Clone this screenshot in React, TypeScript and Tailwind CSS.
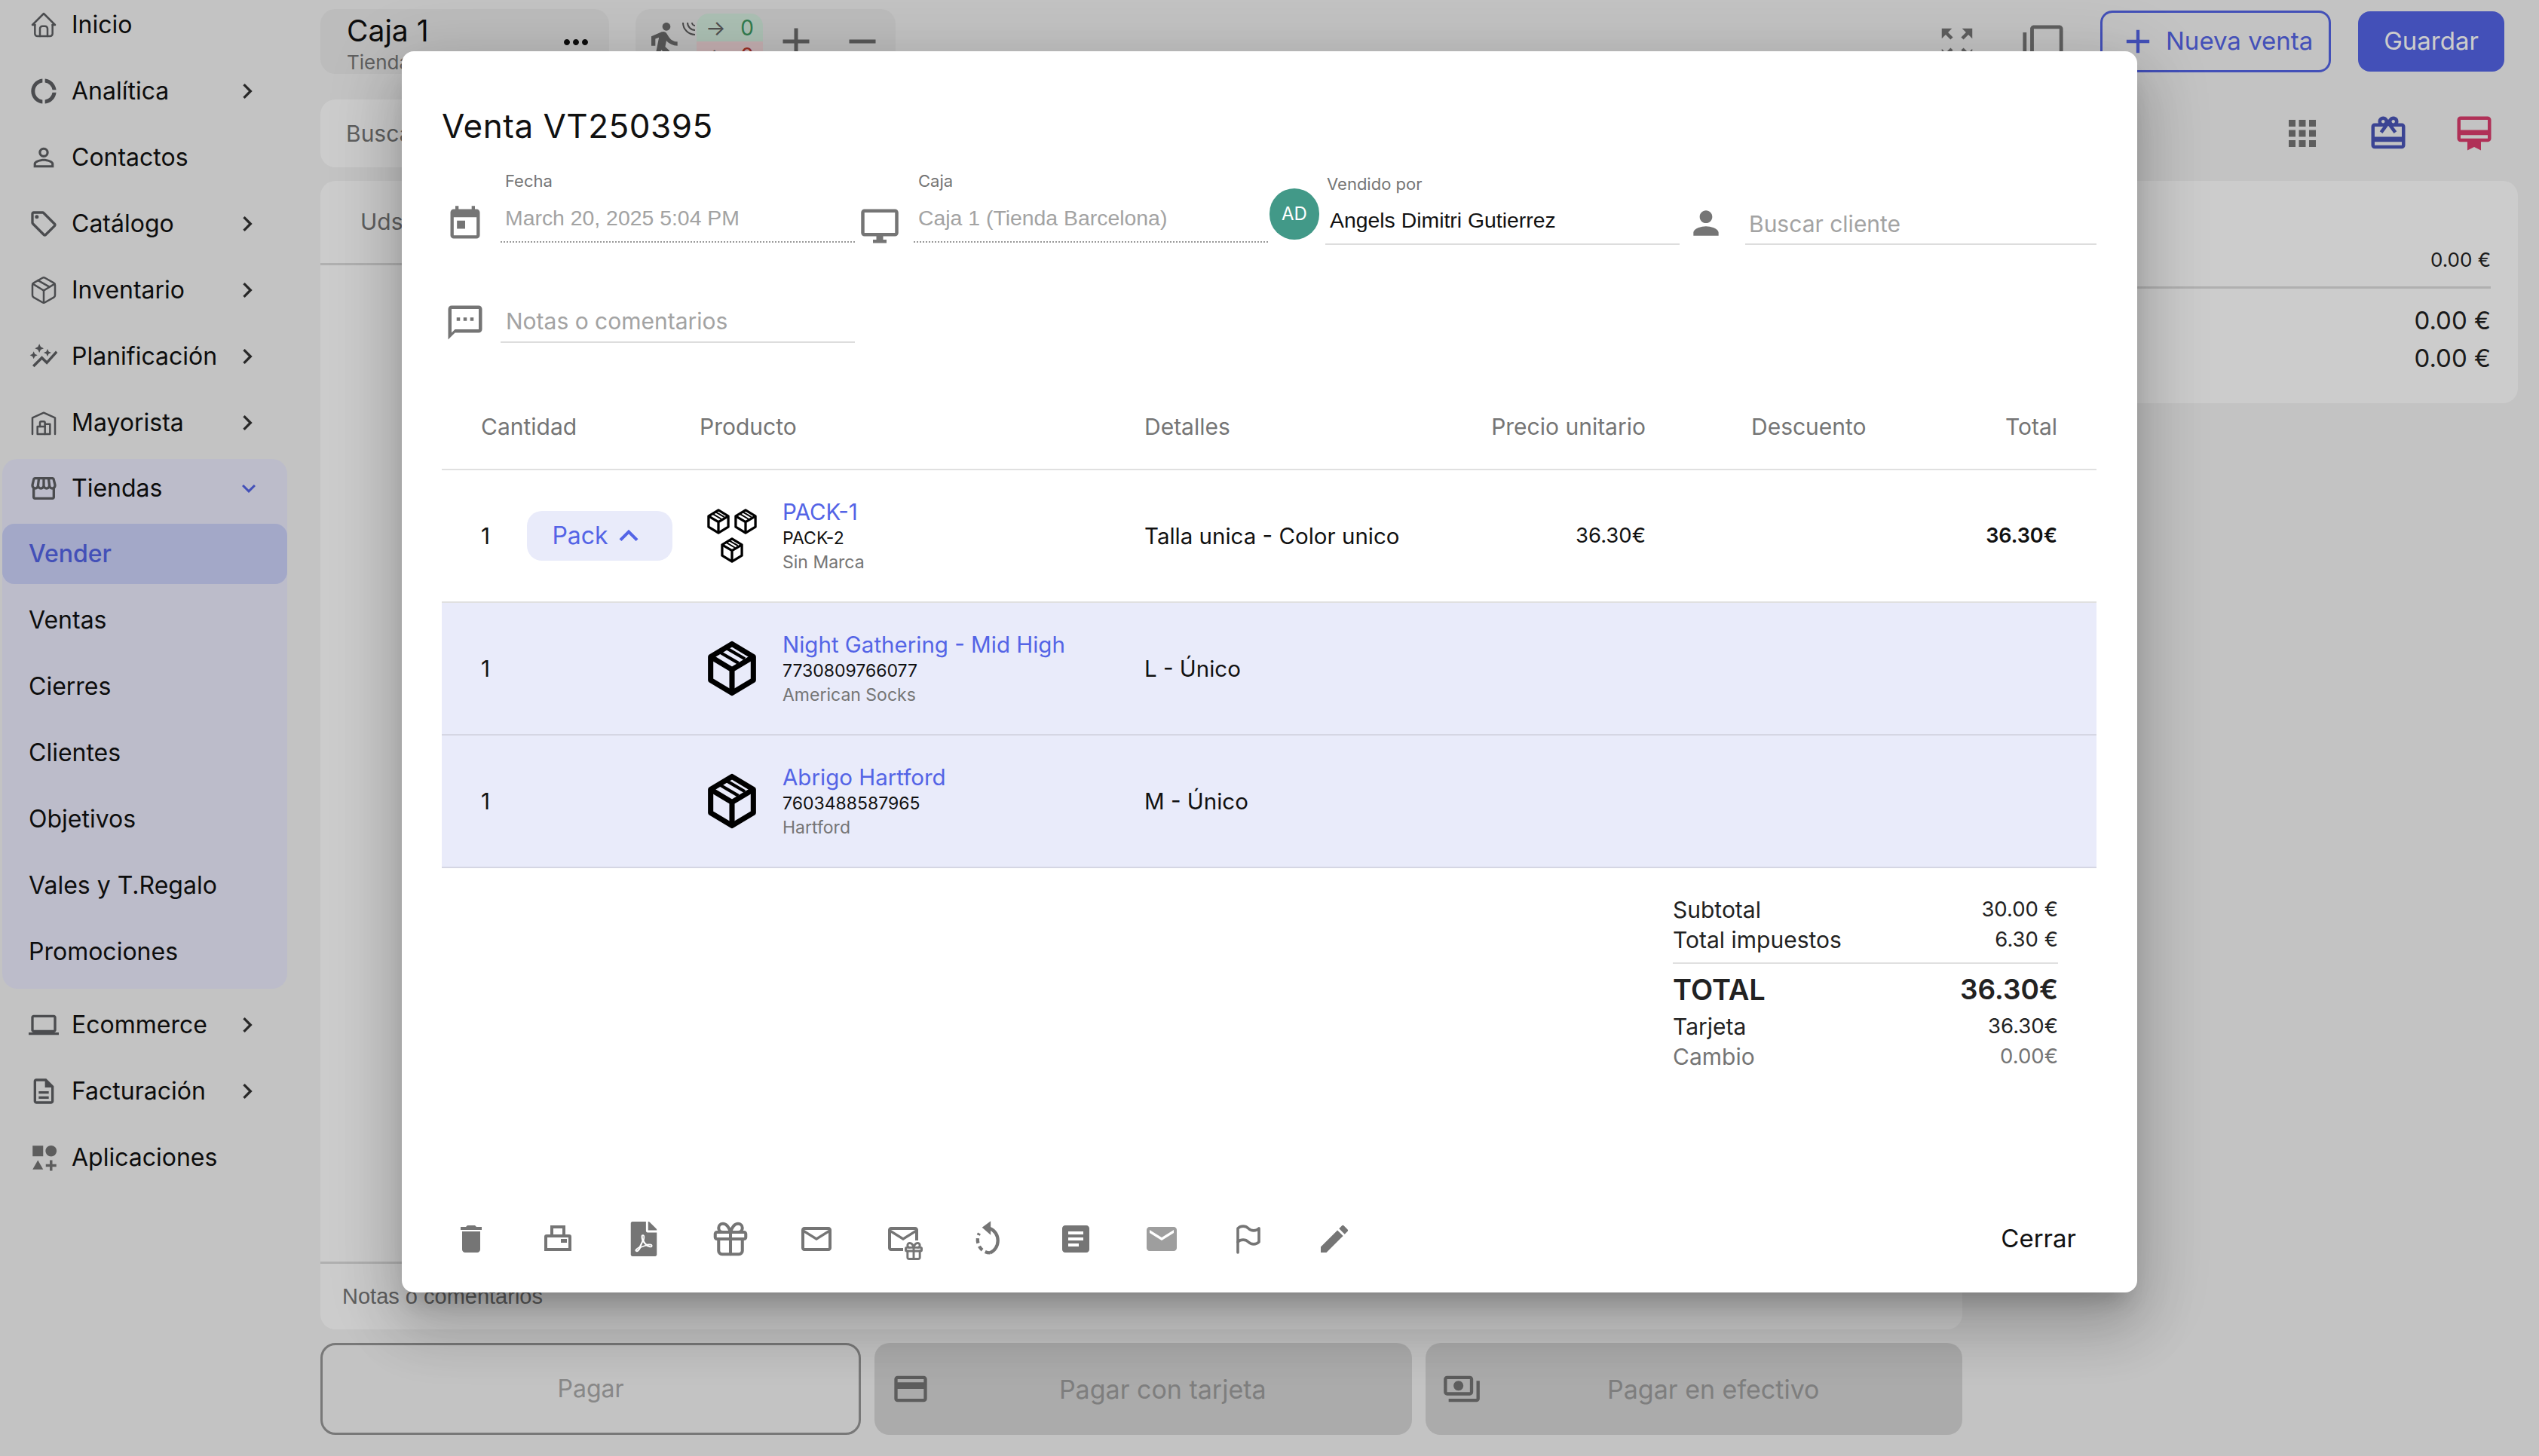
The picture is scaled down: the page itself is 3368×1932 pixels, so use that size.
import {
  MdAdd, MdApps, MdArticle, MdAutoGraph, MdCreditCard, MdDelete, MdDirectionsWalk, MdEdit, MdEmail, MdKeyboardArrowDown,
  MdKeyboardArrowRight, MdKeyboardArrowUp, MdMoreHoriz, MdOutlineCardGiftcard, MdOutlineCardMembership, MdOutlineDescription,
  MdOutlineDesktopWindows, MdOutlineDonutLarge, MdOutlineFilterNone, MdOutlineLaptop, MdOutlineMail, MdOutlinePayments,
  MdOutlinePersonOutline, MdOutlineSell, MdOutlineStorefront, MdOutlineTextsms, MdPerson, MdRemove, MdToday, MdZoomOutMap,
} from 'react-icons/md';
import { FaFilePdf } from 'react-icons/fa';
import { LuGift, LuPackage } from 'react-icons/lu';
import { TbBuildingWarehouse, TbFlag, TbHome } from 'react-icons/tb';
import type { ReactNode } from 'react';

const sans = 'font-["Inter",sans-serif]';
const helvetica = "font-['Liberation_Sans',sans-serif]";

const AppsIcon = () => (
  <svg viewBox="0 0 24 24" className="w-[42px] h-[42px] fill-[#757575]">
    <rect x="3" y="3" width="8" height="8" />
    <circle cx="17" cy="7" r="4.2" />
    <path d="M7 14l4 7H3z" />
    <path d="M16 14h2v3h3v2h-3v3h-2v-3h-3v-2h3z" />
  </svg>
);

const PrinterIcon = () => (
  <svg viewBox="0 0 24 24" className="w-[48px] h-[48px] fill-[#757575]">
    <path d="M7 3h10v6h2.500A1.500 1.500 0 0 1 21 10.500V20H3v-9.500A1.500 1.500 0 0 1 4.500 9H7zm2 2v4h6V5zM5 11v7h14v-7z" fillRule="evenodd" />
    <rect x="14" y="12" width="4" height="2.500" />
  </svg>
);

const ReplayIcon = () => (
  <svg viewBox="0 0 24 24" className="w-[52px] h-[52px]">
    <path d="M12.500 2v6.500L8.500 5z" fill="#757575" stroke="#757575" strokeWidth="1" />
    <path d="M12.500 5.500a7.500 8 0 0 1 0 15" fill="none" stroke="#757575" strokeWidth="2" />
    <path d="M12.500 20.500a7.500 8 0 0 1-6.500-12" fill="none" stroke="#757575" strokeWidth="2" strokeDasharray="3 2" />
  </svg>
);

const BoxIcon = ({ className }: { className: string }) => (
  <svg viewBox="0 0 24 26" className={className} fill="none" stroke="#000" strokeWidth="2.500" strokeLinejoin="round">
    <path d="M12 1.500L22 7.500V18.500L12 24.500L2 18.500V7.500Z" />
    <path d="M2 7.500L12 13.500L22 7.500M12 13.500V24.500" />
    <path d="M6.500 5.500L15 10.500" strokeWidth="1.500" />
    <path d="M9.500 3.500L18 8.500" strokeWidth="1.500" />
  </svg>
);

const GiftMailIcon = () => (
  <div className="relative w-[48px] h-[48px]">
    <MdOutlineMail className="w-[48px] h-[48px] text-[#757575]" />
    <div className="absolute right-[-4px] bottom-[-6px] bg-white rounded-[4px]">
      <LuGift className="w-[28px] h-[28px] text-[#757575]" strokeWidth={2.500} />
    </div>
  </div>
);

const WavesIcon = () => (
  <svg viewBox="0 0 20 20" className="w-[20px] h-[20px] ml-[-8px] mt-[16px]" fill="none" stroke="#5e5e5e" strokeWidth="2">
    <path d="M2 2a16 16 0 0 0 16 16" />
    <path d="M8 2a10 10 0 0 0 10 10" />
    <path d="M14 2a4 4 0 0 0 4 4" />
  </svg>
);

const sideIcon = 'w-[40px] h-[40px] text-[#5e6063] shrink-0';

const NavRow = ({ icon, label, arrow = true }: { icon: ReactNode; label: string; arrow?: boolean }) => (
  <div className="flex items-center h-[80px] pl-[38px]">
    <div className="w-[57px] flex items-center">{icon}</div>
    <span className="text-[32px] text-[#111]">{label}</span>
    {arrow && <MdKeyboardArrowRight className="absolute left-[308px] w-[40px] h-[40px] text-[#333]" />}
  </div>
);

const SubRow = ({ label, active }: { label: string; active?: boolean }) => (
  <div className={`flex items-center h-[80px] pl-[35px] rounded-[16px] text-[32px] ${active ? 'bg-[#ccd2fb] text-[#5464e6] font-medium' : 'text-[#111]'}`}>
    {label}
  </div>
);

const Sidebar = () => (
  <aside className="w-[425px] shrink-0 -mt-[7px] flex flex-col gap-[8px] relative">
    <NavRow icon={<TbHome className={sideIcon} strokeWidth={1.500} />} label="Inicio" arrow={false} />
    <NavRow icon={<MdOutlineDonutLarge className={sideIcon} />} label="Analítica" />
    <NavRow icon={<MdOutlinePersonOutline className={sideIcon} />} label="Contactos" arrow={false} />
    <NavRow icon={<MdOutlineSell className={sideIcon} />} label="Catálogo" />
    <NavRow icon={<LuPackage className={sideIcon} strokeWidth={1.500} />} label="Inventario" />
    <NavRow icon={<MdAutoGraph className={sideIcon} />} label="Planificación" />
    <NavRow icon={<TbBuildingWarehouse className={sideIcon} strokeWidth={1.500} />} label="Mayorista" />
    <div className="ml-[3px] w-[378px] bg-[#ebecfd] rounded-[20px] flex flex-col gap-[8px] pb-[9px]">
      <div className="flex items-center h-[78px] pl-[35px] relative">
        <div className="w-[57px]"><MdOutlineStorefront className={sideIcon} /></div>
        <span className="text-[32px] text-[#111]">Tiendas</span>
        <MdKeyboardArrowDown className="absolute left-[309px] w-[36px] h-[36px] text-[#5464e6]" />
      </div>
      <SubRow label="Vender" active />
      <SubRow label="Ventas" />
      <SubRow label="Cierres" />
      <SubRow label="Clientes" />
      <SubRow label="Objetivos" />
      <SubRow label="Vales y T.Regalo" />
      <SubRow label="Promociones" />
    </div>
    <NavRow icon={<MdOutlineLaptop className={sideIcon} />} label="Ecommerce" />
    <NavRow icon={<MdOutlineDescription className={sideIcon} />} label="Facturación" />
    <NavRow icon={<AppsIcon />} label="Aplicaciones" arrow={false} />
  </aside>
);

const TopBar = () => (
  <div className="flex items-start pt-[12px] pr-[46px] h-[134px]">
    <div className="w-[383px] h-[86px] rounded-[20px] bg-[#ebebeb] pl-[35px] pr-[24px] pt-[2px] relative">
      <div className="text-[39px] leading-[54px] text-[#111]">Caja 1</div>
      <div className="text-[26px] leading-[30px] text-[#777]">Tienda Barcelona</div>
      <MdMoreHoriz className="absolute right-[20px] top-[20px] w-[48px] h-[48px] text-[#111]" />
    </div>
    <div className="ml-[35px] w-[345px] h-[86px] rounded-[20px] bg-[#ebebeb] flex items-start">
      <MdDirectionsWalk className="ml-[5px] mt-[14px] w-[64px] h-[64px] text-[#6d6d6d]" />
      <WavesIcon />
      <div className="mt-[6px] w-[88px] rounded-[16px] overflow-hidden">
        <div className="h-[37px] bg-[#d8f0e2] flex items-center justify-between px-[12px] text-[28px] text-[#3e9b62]"><span className="text-[#666]">→</span>0</div>
        <div className="h-[37px] bg-[#f5dadd] flex items-center justify-between px-[12px] text-[28px] text-[#c0392b]"><span className="text-[#666]">←</span>0</div>
      </div>
      <MdAdd className="ml-[14px] mt-[13px] w-[60px] h-[60px] text-[#6d6d6d]" />
      <MdRemove className="ml-[28px] mt-[13px] w-[60px] h-[60px] text-[#6d6d6d]" />
    </div>
    <div className="ml-auto flex items-center mt-[2px]">
      <MdZoomOutMap className="w-[54px] h-[54px] text-[#777] mt-[6px]" />
      <MdOutlineFilterNone className="ml-[58px] w-[58px] h-[58px] text-[#777] mt-[10px]" />
      <button className={`ml-[47px] w-[306px] h-[82px] rounded-[16px] border-[3px] border-[#5464e6] text-[#5464e6] text-[33px] flex items-center pl-[21px] gap-[11px] ${sans}`}>
        <MdAdd className="w-[52px] h-[52px]" />Nueva venta
      </button>
      <button className={`ml-[36px] w-[194px] h-[80px] rounded-[16px] bg-[#5464e6] text-white text-[33px] ${sans}`}>Guardar</button>
    </div>
  </div>
);

const PayButtons = () => (
  <div className="flex gap-[18px] h-[122px] text-[32px]">
    <div className="w-[717px] rounded-[20px] border-[3px] border-[#969696] flex items-center justify-center text-[#aaa]">Pagar</div>
    <div className="flex-1 rounded-[20px] bg-[#d6d6d6] flex items-center relative justify-center pl-[52px] text-[#9e9e9e] text-[34px]">
      <MdCreditCard className="absolute left-[22px] w-[52px] h-[52px] text-[#757575]" />
      Pagar con tarjeta
    </div>
    <div className="flex-1 rounded-[20px] bg-[#d6d6d6] flex items-center relative justify-center pl-[52px] text-[#9e9e9e] text-[34px]">
      <MdOutlinePayments className="absolute left-[22px] w-[52px] h-[52px] text-[#757575]" />
      Pagar en efectivo
    </div>
  </div>
);

const Background = () => (
  <div className="flex h-full">
    <Sidebar />
    <div className="flex-1 flex flex-col min-w-0">
      <TopBar />
      <div className="flex flex-1 min-h-0">
        <div className="w-[2178px] flex flex-col">
          <div className="h-[90px] rounded-[20px] bg-white flex items-center pl-[34px] text-[30px] text-[#777] -mt-[2px]">Buscar</div>
          <div className="mt-[18px] h-[1524px] rounded-[20px] bg-white flex flex-col">
            <div className="h-[112px] border-b-[3px] border-[#ddd] pl-[53px] flex items-center text-[30px] text-[#777]">Uds</div>
            <div className="flex-1" />
            <div className={`h-[90px] border-t-[3px] border-[#ddd] pl-[29px] flex items-center text-[29px] text-[#777] ${helvetica}`}>Notas o comentarios</div>
          </div>
          <div className="mt-[18px]"><PayButtons /></div>
        </div>
        <div className="flex-1 pl-[22px] pr-[28px] -mt-[2px]">
          <div className="flex items-center justify-end gap-[60px] h-[90px] pr-[31px]">
            <MdApps className="w-[54px] h-[54px] text-[#757575]" />
            <MdOutlineCardGiftcard className="w-[54px] h-[54px] text-[#4a56b8]" />
            <MdOutlineCardMembership className="w-[54px] h-[54px] text-[#dc3d6d]" />
          </div>
          <div className="mt-[18px] h-[295px] rounded-[20px] bg-white pr-[36px] text-right text-[#222]">
            <div className="h-[143px] border-b-[3px] border-[#ddd] flex items-end justify-end pb-[16px] text-[26px]">0.00 €</div>
            <div className="mt-[17px] text-[33px] leading-[50px]">0.00 €</div>
            <div className="text-[33px] leading-[50px]">0.00 €</div>
          </div>
        </div>
      </div>
    </div>
  </div>
);

const Field = ({ label, value, dotted, muted, labelClass = 'pl-[6px]', height }: {
  label: string; value: string; dotted?: boolean; muted?: boolean; labelClass?: string; height: string;
}) => (
  <div className="w-[470px] shrink-0">
    <div className={`text-[22px] leading-[30px] text-[#757575] ${labelClass}`}>{label}</div>
    <div className={`${height} flex items-center pl-[6px] pt-[3px] border-b-[2px] ${dotted ? 'border-dotted border-[#999]' : 'border-solid border-[#ddd]'} text-[28.400px] ${helvetica} ${muted ? 'text-[#a3a3a3]' : 'text-[#111]'}`}>
      {value}
    </div>
  </div>
);

const rowCols = 'grid grid-cols-[290px_590px_340px_325px_340px_206px] items-center pl-[52px]';

const ProductRow = ({ name, code, brand, details, sub, children }: {
  name: string; code: string; brand: string; details: string; sub?: boolean; children?: ReactNode;
}) => (
  <div className={`${rowCols} h-[176px] border-b-[2px] ${sub ? 'bg-[#e9ebfa] border-[#d5d6e3]' : 'border-[#e0e0e0]'} text-[29.500px] text-[#111]`}>
    <div className="flex items-center">
      <span className="w-[61px]">1</span>
      {!sub && (
        <span className="w-[193px] h-[66px] rounded-[20px] bg-[#e9ebfa] text-[#5464e6] text-[32px] flex items-center justify-center gap-[2px]">
          Pack<MdKeyboardArrowUp className="w-[50px] h-[50px]" />
        </span>
      )}
    </div>
    <div className="flex items-center">
      {sub ? (
        <BoxIcon className="ml-[9px] w-[68px] h-[74px]" />
      ) : (
        <div className="ml-[9px] w-[68px] h-[72px] flex flex-wrap justify-between content-between">
          <BoxIcon className="w-[32px] h-[34px]" />
          <BoxIcon className="w-[32px] h-[34px]" />
          <BoxIcon className="w-[32px] h-[34px] mx-auto" />
        </div>
      )}
      <div className="ml-[33px]">
        <div className="text-[#5464e6] leading-[36px]">{name}</div>
        <div className="text-[23px] leading-[34px]">{code}</div>
        <div className="text-[23px] leading-[30px] text-[#757575]">{brand}</div>
      </div>
    </div>
    <div className="whitespace-nowrap">{details}</div>
    {children}
  </div>
);

const SummaryRow = ({ label, value }: { label: string; value: string }) => (
  <div className="flex justify-between items-center h-[40px]">
    <span className="text-[30px]">{label}</span>
    <span className="text-[27.500px]">{value}</span>
  </div>
);

const footerIcon = 'w-[48px] h-[48px] text-[#757575]';

const Modal = () => (
  <div className="absolute left-[533px] top-[68px] w-[2302px] h-[1647px] bg-white rounded-[16px] shadow-[0_22px_30px_-14px_rgba(0,0,0,0.2),0_48px_76px_6px_rgba(0,0,0,0.14),0_18px_92px_16px_rgba(0,0,0,0.12)] flex flex-col pl-[53px] pr-[54px] pb-[32px]">
    <h2 className="mt-[69px] text-[44px] leading-[60px] text-[#111] tracking-[0.5px]">Venta VT250395</h2>

    <div className="mt-[28px] flex items-start h-[100px]">
      <div className="w-[78px] pt-[46px] pl-[5px]"><MdToday className="w-[52px] h-[52px] text-[#757575]" /></div>
      <Field label="Fecha" value="March 20, 2025 5:04 PM" dotted muted height="h-[67px]" />
      <div className="w-[78px] pt-[48px] pl-[6px]"><MdOutlineDesktopWindows className="w-[54px] h-[54px] text-[#757575]" /></div>
      <Field label="Caja" value="Caja 1 (Tienda Barcelona)" dotted muted height="h-[67px]" />
      <div className="ml-[2px] mt-[25px] w-[66px] h-[68px] shrink-0 rounded-full bg-[#429988] text-white text-[24px] flex items-center justify-center">AD</div>
      <div className="ml-[8px] pt-[4px]">
        <Field label="Vendido por" value="Angels Dimitri Gutierrez" height="h-[66px]" labelClass="pl-[2px]" />
      </div>
      <div className="w-[87px] pt-[46px] pl-[10px]"><MdPerson className="w-[50px] h-[50px] text-[#757575]" /></div>
      <div className="w-[466px] pt-[34px]">
        <div className="h-[66px] flex items-center pl-[5px] pt-[12px] border-b-[2px] border-[#ddd] text-[30px] text-[#a3a3a3]">Buscar cliente</div>
      </div>
    </div>

    <div className="mt-[74px] flex items-start">
      <div className="w-[78px] pt-[2px] pl-[4px]"><MdOutlineTextsms className="w-[54px] h-[54px] text-[#757575]" /></div>
      <div className="w-[470px] h-[56px] flex items-center pl-[7px] border-b-[2px] border-[#ddd] text-[30px] text-[#a3a3a3]">Notas o comentarios</div>
    </div>

    <div className={`${rowCols} mt-[55px] h-[114px] border-b-[2px] border-[#e0e0e0] text-[30px] text-[#757575]`}>
      <span>Cantidad</span>
      <span>Producto</span>
      <span>Detalles</span>
      <span className="text-right">Precio unitario</span>
      <span className="pl-[140px]">Descuento</span>
      <span className="text-right">Total</span>
    </div>
    <ProductRow name="PACK-1" code="PACK-2" brand="Sin Marca" details="Talla unica - Color unico">
      <span className="text-right text-[27.500px]">36.30€</span>
      <span />
      <span className="text-right font-semibold text-[27px]">36.30€</span>
    </ProductRow>
    <ProductRow sub name="Night Gathering - Mid High" code="7730809766077" brand="American Socks" details="L - Único" />
    <ProductRow sub name="Abrigo Hartford" code="7603488587965" brand="Hartford" details="M - Único" />

    <div className="mt-[35px] ml-auto mr-[51px] w-[511px] text-[#222]">
      <SummaryRow label="Subtotal" value="30.00 €" />
      <SummaryRow label="Total impuestos" value="6.30 €" />
      <div className="mt-[10px] border-t-[2px] border-[#e0e0e0]" />
      <div className="flex justify-between items-center h-[58px] mt-[5px] font-semibold">
        <span className="text-[38px]">TOTAL</span>
        <span className="text-[37px]">36.30€</span>
      </div>
      <SummaryRow label="Tarjeta" value="36.30€" />
      <div className="text-[#757575]"><SummaryRow label="Cambio" value="0.00€" /></div>
    </div>

    <div className="mt-auto flex items-center gap-[36.500px] h-[78px] pr-[27px]">
      {[
        <MdDelete className={footerIcon} />,
        <PrinterIcon />,
        <FaFilePdf className="w-[40px] h-[46px] text-[#757575]" />,
        <LuGift className="w-[54px] h-[54px] text-[#757575]" strokeWidth={1.800} />,
        <MdOutlineMail className={footerIcon} />,
        <GiftMailIcon />,
        <ReplayIcon />,
        <MdArticle className={footerIcon} />,
        <MdEmail className="w-[48px] h-[48px] text-[#9e9e9e]" />,
        <TbFlag className={footerIcon} strokeWidth={1.800} />,
        <MdEdit className={footerIcon} />,
      ].map((icon, i) => (
        <div key={i} className="w-[78px] flex justify-center">{icon}</div>
      ))}
      <span className="ml-auto text-[33px] text-[#111]">Cerrar</span>
    </div>
  </div>
);

export default function App() {
  return (
    <div className={`relative w-[3368px] h-[1932px] overflow-hidden bg-[#f4f4f4] ${sans}`}>
      <Background />
      <div className="absolute inset-0 bg-black/20" />
      <Modal />
    </div>
  );
}
